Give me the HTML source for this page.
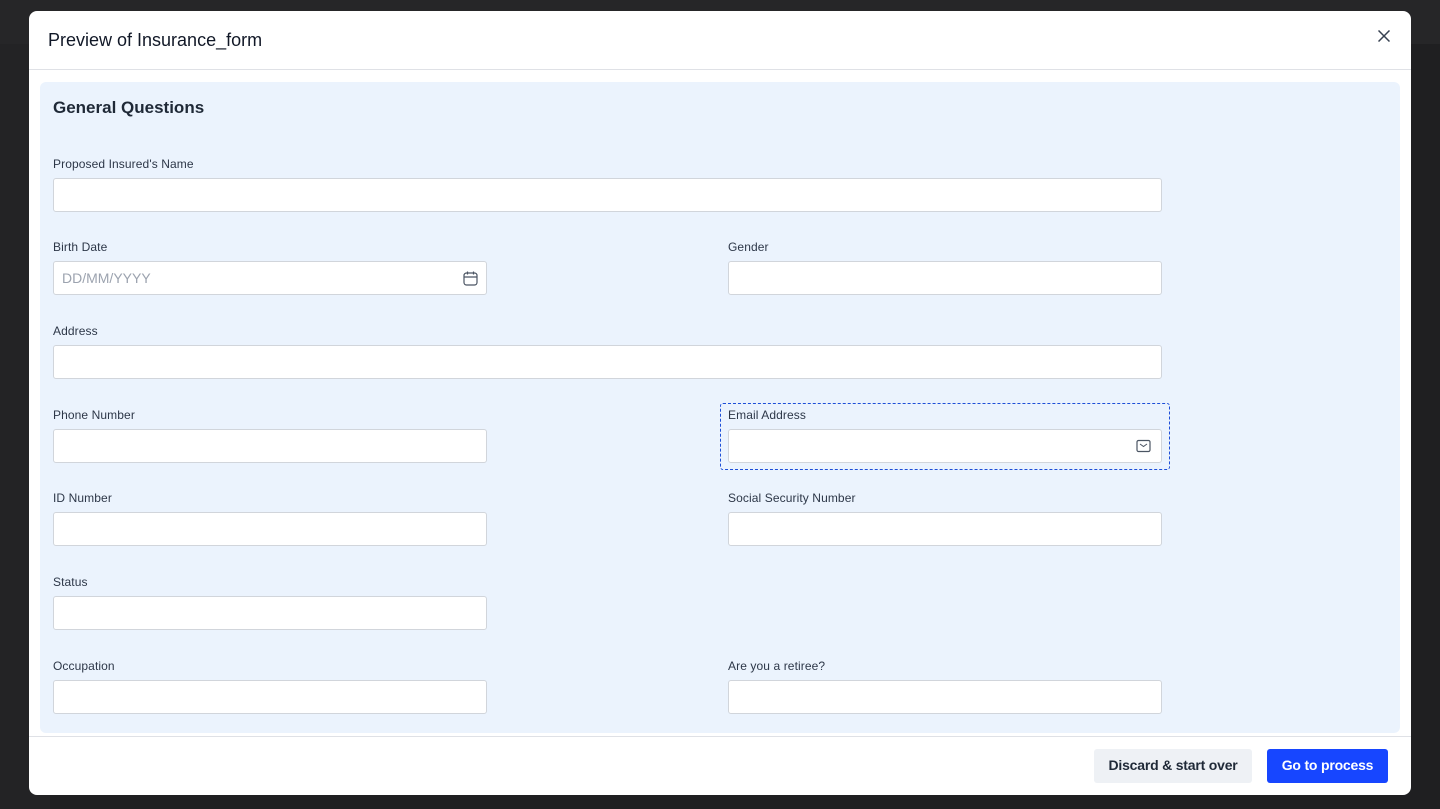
<!DOCTYPE html>
<html><head><style>
*{box-sizing:border-box;margin:0;padding:0}
body{width:1440px;height:809px;background:#1f1f21;font-family:"Liberation Sans",sans-serif;position:relative;overflow:hidden}
.top{position:absolute;left:0;top:0;width:1440px;height:44px;background:#262628}
.side{position:absolute;left:0;top:44px;width:50px;height:765px;background:#232325}
.modal{position:absolute;left:29px;top:11px;width:1382px;height:784px;background:#fff;border-radius:8px;overflow:hidden}
.hdr{height:59px;border-bottom:1px solid #dfe1e6;position:relative}
.hdr h1{position:absolute;left:19px;top:19px;font-size:18px;font-weight:400;color:#111827}
.x{position:absolute;right:21px;top:19px}
.panel{position:absolute;left:11px;top:71px;width:1360px;height:651px;background:#ebf3fd;border-radius:6px}
.panel h2{position:absolute;left:13px;top:16px;font-size:17px;font-weight:700;color:#1f2937}
.lbl{position:absolute;font-size:12px;color:#2d3748;letter-spacing:0.1px}
.in{position:absolute;height:34px;background:#fff;border:1px solid #d1d5db;border-radius:3px}
.foot{position:absolute;left:0;top:725px;width:1382px;border-top:1px solid #dfe1e6;height:59px}
.b1{position:absolute;left:1065px;top:12px;width:158px;height:34px;background:#eef1f5;border-radius:3px;font-size:14px;font-weight:700;color:#1f2937;text-align:center;line-height:33px;letter-spacing:-0.2px}
.b2{position:absolute;left:1238px;top:12px;width:121px;height:34px;background:#1746ff;border-radius:3px;font-size:14px;font-weight:700;color:#fff;text-align:center;line-height:33px;letter-spacing:-0.2px}
</style></head><body>
<div class="top"></div><div class="side"></div>
<div class="modal">
<div class="hdr"><h1>Preview of Insurance_form</h1>
<svg class="x" width="12" height="12" viewBox="0 0 12 12"><path d="M0.5 0.5L11.5 11.5M11.5 0.5L0.5 11.5" stroke="#374151" stroke-width="1.5"/></svg></div>
<div class="panel">
<h2>General Questions</h2>
<div class="lbl" style="left:13px;top:75px">Proposed Insured's Name</div>
<div class="in" style="left:13px;top:96px;width:1109px"></div>
<div class="lbl" style="left:13px;top:158px">Birth Date</div>
<div class="in" style="left:13px;top:179px;width:434px;font-size:14px;color:#9ca3af;padding:8px 8px">DD/MM/YYYY
<svg style="position:absolute;right:8px;top:9px" width="15" height="15" viewBox="0 0 15 15"><rect x="1" y="2" width="13" height="12" rx="2.5" fill="none" stroke="#4b5563" stroke-width="1.2"/><path d="M1 6H14M4.5 0.5V3.5M10.5 0.5V3.5" stroke="#4b5563" stroke-width="1.2"/></svg></div>
<div class="lbl" style="left:688px;top:158px">Gender</div>
<div class="in" style="left:688px;top:179px;width:434px"></div>
<div class="lbl" style="left:13px;top:242px">Address</div>
<div class="in" style="left:13px;top:263px;width:1109px"></div>
<div class="lbl" style="left:13px;top:326px">Phone Number</div>
<div class="in" style="left:13px;top:347px;width:434px"></div>
<div style="position:absolute;left:680px;top:321px;width:450px;height:67px;border:1px dashed #1d4ed8;border-radius:3px"></div>
<div class="lbl" style="left:688px;top:326px">Email Address</div>
<div class="in" style="left:688px;top:347px;width:434px"><svg style="position:absolute;right:10px;top:9px" width="15" height="14" viewBox="0 0 15 14"><rect x="1" y="1.5" width="13" height="11" rx="1.5" fill="none" stroke="#4b5563" stroke-width="1.2"/><path d="M4 5L7.5 7.5L11 5" fill="none" stroke="#4b5563" stroke-width="1"/></svg></div>
<div class="lbl" style="left:13px;top:409px">ID Number</div>
<div class="in" style="left:13px;top:430px;width:434px"></div>
<div class="lbl" style="left:688px;top:409px">Social Security Number</div>
<div class="in" style="left:688px;top:430px;width:434px"></div>
<div class="lbl" style="left:13px;top:493px">Status</div>
<div class="in" style="left:13px;top:514px;width:434px"></div>
<div class="lbl" style="left:13px;top:577px">Occupation</div>
<div class="in" style="left:13px;top:598px;width:434px"></div>
<div class="lbl" style="left:688px;top:577px">Are you a retiree?</div>
<div class="in" style="left:688px;top:598px;width:434px"></div>
</div>
<div class="foot"><div class="b1">Discard &amp; start over</div><div class="b2">Go to process</div></div>
</div>
</body></html>
